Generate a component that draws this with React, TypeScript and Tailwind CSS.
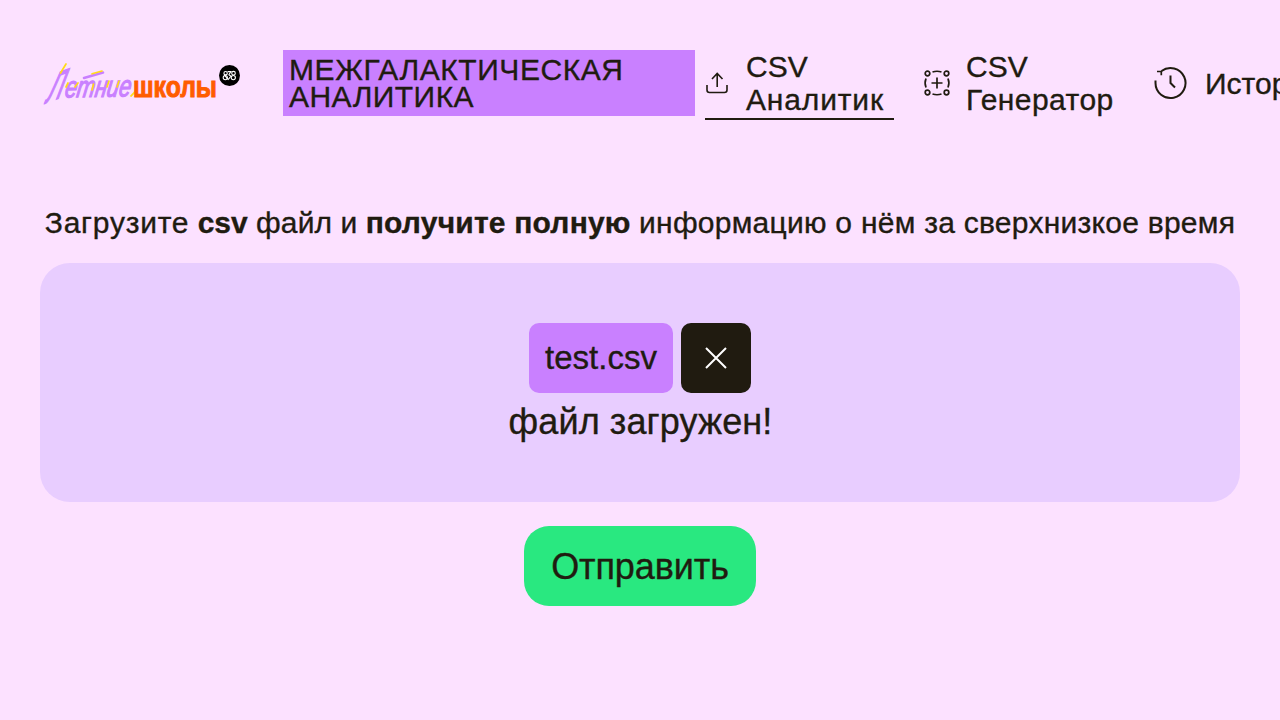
import type { ReactNode } from 'react';

function Logo() {
  return (
    <svg width="203" height="48" viewBox="0 0 203 48" className="shrink-0 overflow-visible" role="img" aria-label="Летние школы">
      <g fontFamily="'Liberation Sans', sans-serif" fontStyle="italic" fill="#c980ff" stroke="#c980ff">
        <text transform="translate(5.500 43) rotate(-20) skewX(-36)" fontSize="35" strokeWidth="1.5" textLength="17" lengthAdjust="spacingAndGlyphs">Л</text>
        <text transform="translate(24 37.500) rotate(-1) skewX(-10)" fontSize="30" strokeWidth="1.2" textLength="66" lengthAdjust="spacingAndGlyphs">етние</text>
      </g>
      <g fill="none" stroke="#ffdc16" strokeWidth="1.7" strokeLinecap="round">
        <path d="M20.500 13 26 4M26 27l2-4M35 27l3-4M52 30l1.500-6M67 27l2-6M77 27l2-6M91 36q4-3 5-7" />
      </g>
      <path d="M44 18 63 12.500" stroke="#c980ff" strokeWidth="2.6" strokeLinecap="round" />
      <path d="M52 13.800 62 11" stroke="#ffdc16" strokeWidth="1.700" strokeLinecap="round" />
      <text x="93" y="36.500" fontFamily="'Liberation Sans', sans-serif" fontWeight="700" fontSize="30" fill="#ff5c00" stroke="#ff5c00" strokeWidth="1" textLength="84" lengthAdjust="spacingAndGlyphs">школы</text>
      <circle cx="189.500" cy="15.500" r="10.500" fill="#000" />
      <g fill="none" stroke="#fff" strokeWidth="1.1">
        <circle cx="185.600" cy="13.200" r="1.700" />
        <circle cx="185.300" cy="17.600" r="2.100" />
        <path d="M188.500 19.800 184.200 14.800M187.600 11.600h3.300l-2 3.200 2 1.300-2.600 3.400" />
        <circle cx="193.500" cy="13.200" r="1.800" />
        <circle cx="193.300" cy="17.600" r="2.100" />
      </g>
    </svg>
  );
}

function UploadIcon() {
  return (
    <svg width="24" height="24" viewBox="0 0 24 24" fill="none" stroke="#201b10" strokeWidth="1.6" className="shrink-0">
      <path d="M2 14v5q0 2.500 2.500 2.500h15q2.500 0 2.500-2.500v-5M12.200 16V3M7 8 12.200 2.500 17.500 8" />
    </svg>
  );
}

function GeneratorIcon() {
  return (
    <svg width="28" height="28" viewBox="0 0 28 28" fill="none" stroke="#201b10" strokeWidth="1.700" className="shrink-0">
      <circle cx="4.500" cy="4.500" r="2.300" />
      <circle cx="23.500" cy="4.500" r="2.300" />
      <circle cx="4.500" cy="23.500" r="2.300" />
      <circle cx="23.500" cy="23.500" r="2.300" />
      <path d="M14 8.500v11M8.500 14h11M9.500 3q4.500-1.500 9 0M9.500 25q4.500 1.500 9 0M3 9.500q-1.800 4.500 0 9M25 9.500q1.800 4.500 0 9" />
    </svg>
  );
}

function HistoryIcon() {
  return (
    <svg width="34" height="34" viewBox="0 0 34 34" fill="none" stroke="#201b10" strokeWidth="2" className="shrink-0">
      <path d="M1.500 14.500V17A15 15 0 1 0 7.500 5M16.500 9.500V17l4.500 4.500" />
      <path d="M3 5.500h4.300v3.800" strokeWidth="1.700" />
    </svg>
  );
}

function NavItem({ icon, active = false, children }: { icon: ReactNode; active?: boolean; children: ReactNode }) {
  return (
    <a className={`flex h-[70px] shrink-0 items-center border-b-2 pb-0.5 text-[30px] leading-[33px] ${active ? 'border-[#201b10]' : 'border-transparent'}`}>
      {icon}
      {children}
    </a>
  );
}

export default function App() {
  return (
    <div className="h-screen overflow-hidden bg-[#fce1ff] font-['Liberation_Sans',Arial,sans-serif] text-[#201b10] [-webkit-text-stroke:0.35px_#201b10]">
      <header className="flex h-[120px] items-start whitespace-nowrap pl-10 pt-[50px]">
        <div className="flex h-[66px] w-[203px] shrink-0 items-center pt-0.5 [-webkit-text-stroke:0]">
          <Logo />
        </div>
        <h1 className="ml-10 h-[66px] w-[412px] shrink-0 bg-[#c980ff] pl-1.5 pt-1.5 text-[30px] leading-[27px]">
          <span className="tracking-[0.57px]">МЕЖГАЛАКТИЧЕСКАЯ</span>
          <br />
          <span className="tracking-[0.45px]">АНАЛИТИКА</span>
        </h1>
        <nav className="ml-2.5 flex shrink-0">
          <NavItem active icon={<UploadIcon />}>
            <span className="ml-[17px] w-[148px]">CSV<br /><span className="tracking-[0.85px]">Аналитик</span></span>
          </NavItem>
          <div className="ml-[29px] flex">
            <NavItem icon={<GeneratorIcon />}>
              <span className="ml-[15px] w-[157px]">CSV<br /><span className="tracking-[0.45px]">Генератор</span></span>
            </NavItem>
          </div>
          <div className="ml-[31px] flex">
            <NavItem icon={<HistoryIcon />}>
              <span className="ml-[17px]">История</span>
            </NavItem>
          </div>
        </nav>
      </header>
      <main className="flex flex-col items-center px-10 pt-[86px]">
        <p className="whitespace-nowrap text-[30px] leading-[33px]">
          <span className="tracking-[0.76px]">Загрузите</span> <b>csv</b> <span className="tracking-[0.1px]">файл и</span>{' '}
          <b className="tracking-[0.21px]">получите полную</b> <span className="tracking-[0.26px]">информацию о нём за сверхнизкое время</span>
        </p>
        <section className="mt-6 flex h-[239px] w-full flex-col items-center rounded-[30px] bg-[#e8cdff] pt-[60px]">
          <div className="flex gap-2">
            <div className="flex h-[70px] w-36 items-center justify-center rounded-[10px] bg-[#c980ff] text-[33px]">test.csv</div>
            <button aria-label="Удалить" className="flex size-[70px] items-center justify-center rounded-[10px] bg-[#201b10] pr-px">
              <svg width="22" height="22" viewBox="0 0 22 22" stroke="#fff" strokeWidth="2">
                <path d="M1 1 21 21M21 1 1 21" />
              </svg>
            </button>
          </div>
          <p className="mt-[9px] pl-px text-[36px] leading-10 tracking-[0.1px]">файл загружен!</p>
        </section>
        <button className="mt-6 h-20 w-[232px] rounded-[25px] bg-[#29e880] pt-px text-[36px] tracking-[-0.1px]">Отправить</button>
      </main>
    </div>
  );
}
